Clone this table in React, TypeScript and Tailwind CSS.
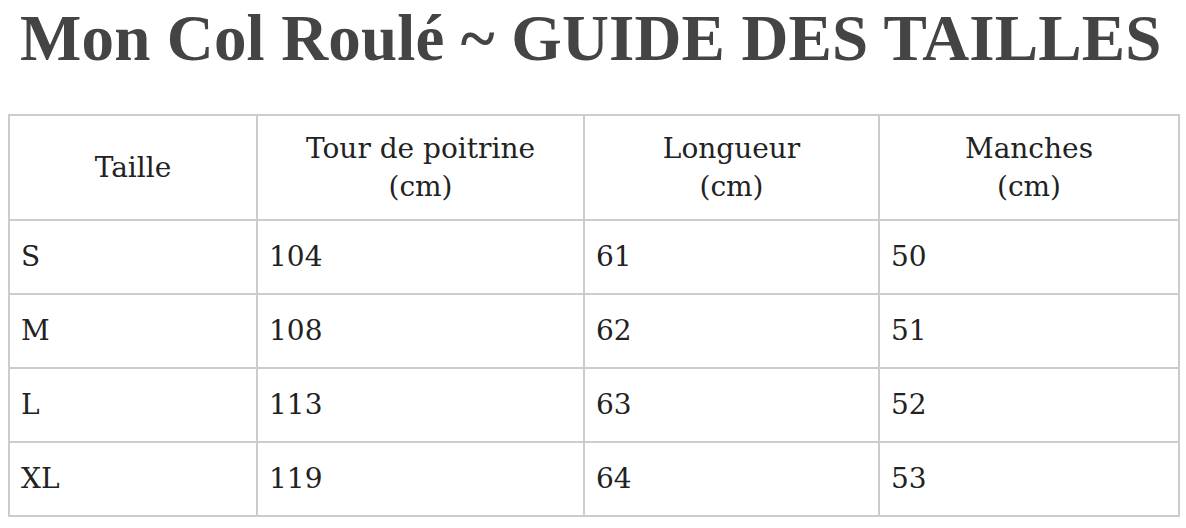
import React from "react";

const rows = [
  ["S", "104", "61", "50"],
  ["M", "108", "62", "51"],
  ["L", "113", "63", "52"],
  ["XL", "119", "64", "53"],
];

export default function App() {
  return (
    <div className="w-[1186px] h-[528px] bg-white overflow-hidden pl-2 pt-[2px]" style={{ fontFamily: '"Liberation Serif", "DejaVu Serif", serif' }}>
      <h1 className="pl-[12px] text-[65px] leading-[72px] tracking-[0.15px] font-bold text-[#444444] whitespace-nowrap">
        Mon Col Roulé ~ GUIDE DES TAILLES
      </h1>
      <table className="mt-[40px] border-collapse text-[#222222] text-[28px] leading-[38px]" style={{ fontFamily: '"DejaVu Serif", "Liberation Serif", serif' }}>
        <colgroup>
          <col className="w-[248px]" />
          <col className="w-[327px]" />
          <col className="w-[295px]" />
          <col className="w-[300px]" />
        </colgroup>
        <thead>
          <tr className="h-[105px]">
            <th className="border-2 border-[#cccccc] font-normal text-center align-middle">Taille</th>
            <th className="border-2 border-[#cccccc] font-normal text-center align-middle">Tour de poitrine<br />(cm)</th>
            <th className="border-2 border-[#cccccc] font-normal text-center align-middle">Longueur<br />(cm)</th>
            <th className="border-2 border-[#cccccc] font-normal text-center align-middle">Manches<br />(cm)</th>
          </tr>
        </thead>
        <tbody>
          {rows.map((r) => (
            <tr key={r[0]} className="h-[74px]">
              {r.map((c, i) => (
                <td key={i} className="border-2 border-[#cccccc] pl-[11px] align-middle">{c}</td>
              ))}
            </tr>
          ))}
        </tbody>
      </table>
    </div>
  );
}
